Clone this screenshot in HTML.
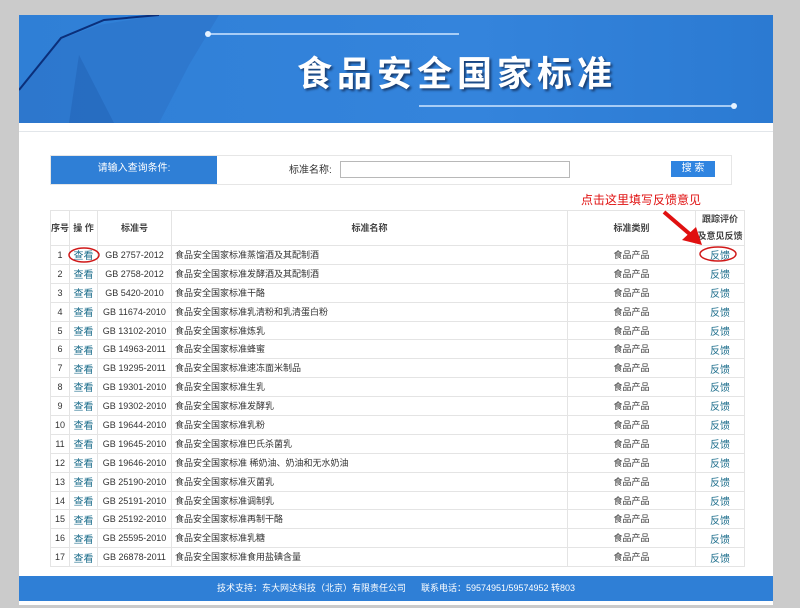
<!DOCTYPE html>
<html><head><meta charset="utf-8"><style>
body{margin:0;width:800px;height:608px;background:#cbcbcb;font-family:"Liberation Sans","Noto Sans CJK SC",sans-serif;position:relative;overflow:hidden}
.page{position:absolute;left:19px;top:15px;width:754px;height:590px;background:#fff}
.banner{position:absolute;left:19px;top:15px;width:754px;height:108px;background:linear-gradient(90deg,#2f7fd6,#3484dc 60%,#2b7ad2);overflow:hidden}
.title{position:absolute;left:278px;top:32px;font-size:35px;line-height:50px;font-weight:bold;color:#fff;letter-spacing:5px;text-shadow:2px 2px 2px #1a3f73;font-family:"Noto Sans CJK SC",sans-serif}
.sep{position:absolute;left:19px;top:123px;width:754px;height:8px;border-bottom:1px solid #e2e6ea}
.search{position:absolute;left:50px;top:155px;width:680px;height:28px;border:1px solid #e6e6e6;background:#fff}
.lab{position:absolute;left:0;top:0;width:166px;height:28px;background:#2f7fd6;color:#fff;font-size:10px;line-height:26px;text-align:center}
.inp{position:absolute;left:289px;top:5px;width:228px;height:15px;border:1px solid #b8b8b8}
.btn{position:absolute;left:620px;top:5px;width:44px;height:16px;background:#2f84e0;color:#fff;font-size:10px;line-height:15px;text-align:center}
table{position:absolute;left:50px;top:210px;border-collapse:collapse;font-size:9px;color:#333}
td,th{border:1px solid #e4e4e4;padding:0;text-align:center;height:17.9px;line-height:12px;vertical-align:middle}
th{height:34px;font-weight:bold;font-size:9px;color:#444}
a{color:#1d6e8c;font-size:10px;text-decoration:none;display:inline-block;line-height:12px;vertical-align:middle;position:relative;top:2px}
.nm{text-align:left;padding-left:3px}
.footer{position:absolute;left:19px;top:576px;width:754px;height:25px;background:#2f7fd6;color:#fff;font-size:9px;text-align:center;line-height:25px}
</style></head><body>
<div class="page"></div>
<div class="banner">
<svg width="754" height="108" style="position:absolute;left:0;top:0">
<polygon points="0,108 0,75 40,25 80,10 140,0 200,0 170,50 140,108" fill="#2a6cc0" opacity=".4"/>
<polyline points="0,75 42,23 85,5 140,0" stroke="#0b2f7a" stroke-width="2" fill="none"/>
<polygon points="60,40 95,108 50,108" fill="#1d5aa8" opacity=".35"/>
<line x1="190" y1="19" x2="440" y2="19" stroke="#cfe6ff" stroke-width="1.5"/>
<circle cx="189" cy="19" r="3" fill="#e6f2ff"/>
<line x1="400" y1="91" x2="714" y2="91" stroke="#cfe6ff" stroke-width="1.5"/>
<circle cx="715" cy="91" r="3" fill="#e6f2ff"/>
</svg>
<div class="title">食品安全国家标准</div>
</div>
<div class="sep"></div>
<div class="search"><div class="lab">请输入查询条件:</div>
<span style="position:absolute;left:238px;top:5px;font-size:10px;color:#333">标准名称:</span>
<div class="inp"></div><div class="btn">搜 索</div></div>
<div style="position:absolute;left:581px;top:191px;color:#e01010;font-size:12px">点击这里填写反馈意见</div>
<table>
<tr><th style="width:18px">序号</th><th style="width:27px">操 作</th><th style="width:73px">标准号</th><th style="width:395px">标准名称</th><th style="width:127px">标准类别</th><th style="width:48px;line-height:17px">跟踪评价<br>及意见反馈</th></tr>
<tr><td>1</td><td><a>查看</a></td><td>GB 2757-2012</td><td class="nm">食品安全国家标准蒸馏酒及其配制酒</td><td>食品产品</td><td><a>反馈</a></td></tr>
<tr><td>2</td><td><a>查看</a></td><td>GB 2758-2012</td><td class="nm">食品安全国家标准发酵酒及其配制酒</td><td>食品产品</td><td><a>反馈</a></td></tr>
<tr><td>3</td><td><a>查看</a></td><td>GB 5420-2010</td><td class="nm">食品安全国家标准干酪</td><td>食品产品</td><td><a>反馈</a></td></tr>
<tr><td>4</td><td><a>查看</a></td><td>GB 11674-2010</td><td class="nm">食品安全国家标准乳清粉和乳清蛋白粉</td><td>食品产品</td><td><a>反馈</a></td></tr>
<tr><td>5</td><td><a>查看</a></td><td>GB 13102-2010</td><td class="nm">食品安全国家标准炼乳</td><td>食品产品</td><td><a>反馈</a></td></tr>
<tr><td>6</td><td><a>查看</a></td><td>GB 14963-2011</td><td class="nm">食品安全国家标准蜂蜜</td><td>食品产品</td><td><a>反馈</a></td></tr>
<tr><td>7</td><td><a>查看</a></td><td>GB 19295-2011</td><td class="nm">食品安全国家标准速冻面米制品</td><td>食品产品</td><td><a>反馈</a></td></tr>
<tr><td>8</td><td><a>查看</a></td><td>GB 19301-2010</td><td class="nm">食品安全国家标准生乳</td><td>食品产品</td><td><a>反馈</a></td></tr>
<tr><td>9</td><td><a>查看</a></td><td>GB 19302-2010</td><td class="nm">食品安全国家标准发酵乳</td><td>食品产品</td><td><a>反馈</a></td></tr>
<tr><td>10</td><td><a>查看</a></td><td>GB 19644-2010</td><td class="nm">食品安全国家标准乳粉</td><td>食品产品</td><td><a>反馈</a></td></tr>
<tr><td>11</td><td><a>查看</a></td><td>GB 19645-2010</td><td class="nm">食品安全国家标准巴氏杀菌乳</td><td>食品产品</td><td><a>反馈</a></td></tr>
<tr><td>12</td><td><a>查看</a></td><td>GB 19646-2010</td><td class="nm">食品安全国家标准 稀奶油、奶油和无水奶油</td><td>食品产品</td><td><a>反馈</a></td></tr>
<tr><td>13</td><td><a>查看</a></td><td>GB 25190-2010</td><td class="nm">食品安全国家标准灭菌乳</td><td>食品产品</td><td><a>反馈</a></td></tr>
<tr><td>14</td><td><a>查看</a></td><td>GB 25191-2010</td><td class="nm">食品安全国家标准调制乳</td><td>食品产品</td><td><a>反馈</a></td></tr>
<tr><td>15</td><td><a>查看</a></td><td>GB 25192-2010</td><td class="nm">食品安全国家标准再制干酪</td><td>食品产品</td><td><a>反馈</a></td></tr>
<tr><td>16</td><td><a>查看</a></td><td>GB 25595-2010</td><td class="nm">食品安全国家标准乳糖</td><td>食品产品</td><td><a>反馈</a></td></tr>
<tr><td>17</td><td><a>查看</a></td><td>GB 26878-2011</td><td class="nm">食品安全国家标准食用盐碘含量</td><td>食品产品</td><td><a>反馈</a></td></tr>
</table>
<svg width="800" height="608" style="position:absolute;left:0;top:0;pointer-events:none">
<ellipse cx="84" cy="255" rx="15" ry="7" fill="none" stroke="#d01818" stroke-width="1.5"/>
<ellipse cx="718" cy="254" rx="18" ry="7" fill="none" stroke="#d01818" stroke-width="1.5"/>
<line x1="664" y1="212" x2="692" y2="236" stroke="#e01010" stroke-width="4"/>
<polygon points="702,245 682,240 696,227" fill="#e01010"/>
</svg>
<div class="footer">技术支持：东大网达科技（北京）有限责任公司 &nbsp;&nbsp;&nbsp;&nbsp; 联系电话：59574951/59574952 转803</div>
</body></html>
